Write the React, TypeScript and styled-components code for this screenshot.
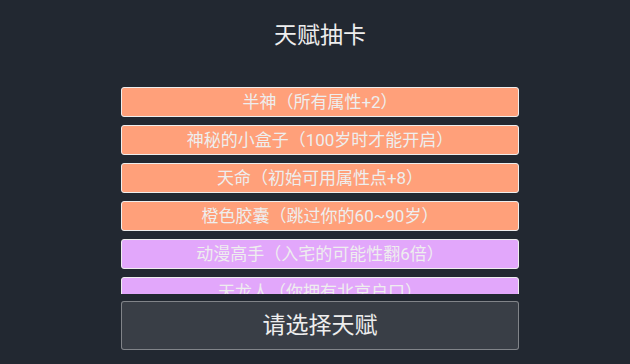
import styled, { createGlobalStyle } from "styled-components"

const GlobalStyle = createGlobalStyle`
  html, body {
    margin: 0;
    padding: 0;
    background-color: #222831;
  }
  body {
    font-family: Roboto, "Noto Sans CJK SC", sans-serif;
    color: #eeeeee;
  }
`

type Grade = 2 | 3

const talents: { name: string; grade: Grade }[] = [
  { name: "半神（所有属性+2）", grade: 3 },
  { name: "神秘的小盒子（100岁时才能开启）", grade: 3 },
  { name: "天命（初始可用属性点+8）", grade: 3 },
  { name: "橙色胶囊（跳过你的60~90岁）", grade: 3 },
  { name: "动漫高手（入宅的可能性翻6倍）", grade: 2 },
  { name: "天龙人（你拥有北京户口）", grade: 2 },
]

const App = () => {
  return (
    <>
      <GlobalStyle />
      <Page>
        <Title>天赋抽卡</Title>
        <TalentList>
          {talents.map((t) => (
            <TalentItem key={t.name} grade={t.grade}>
              {t.name}
            </TalentItem>
          ))}
        </TalentList>
        <MainButton>请选择天赋</MainButton>
      </Page>
    </>
  )
}

export default App

const Page = styled.div`
  width: 630px;
  height: 364px;
  display: flex;
  flex-direction: column;
  align-items: center;
  box-sizing: border-box;
  padding: 19px 0 0 10px;
`

const Title = styled.div`
  font-size: 23px;
  line-height: 34px;
  color: #eeeeee;
`

const TalentList = styled.ul`
  list-style: none;
  margin: 34px 0 0 0;
  padding: 0;
  width: 398px;
  height: 207px;
  overflow: hidden;
`

const TalentItem = styled.li<{ grade: Grade }>`
  box-sizing: border-box;
  height: 30px;
  margin-bottom: 8px;
  border: 1px solid #eeeeee;
  border-radius: 3px;
  background-color: ${(p) => (p.grade === 3 ? "#ffa07a" : "#e2a7fb")};
  color: #eeeeee;
  font-size: 17px;
  line-height: 28px;
  text-align: center;
  white-space: nowrap;
`

const MainButton = styled.div`
  box-sizing: border-box;
  margin-top: 7px;
  width: 398px;
  height: 49px;
  border: 1px solid #eeeeee66;
  border-radius: 3px;
  background-color: #393e46;
  color: #eeeeee;
  font-size: 23px;
  line-height: 47px;
  text-align: center;
`
